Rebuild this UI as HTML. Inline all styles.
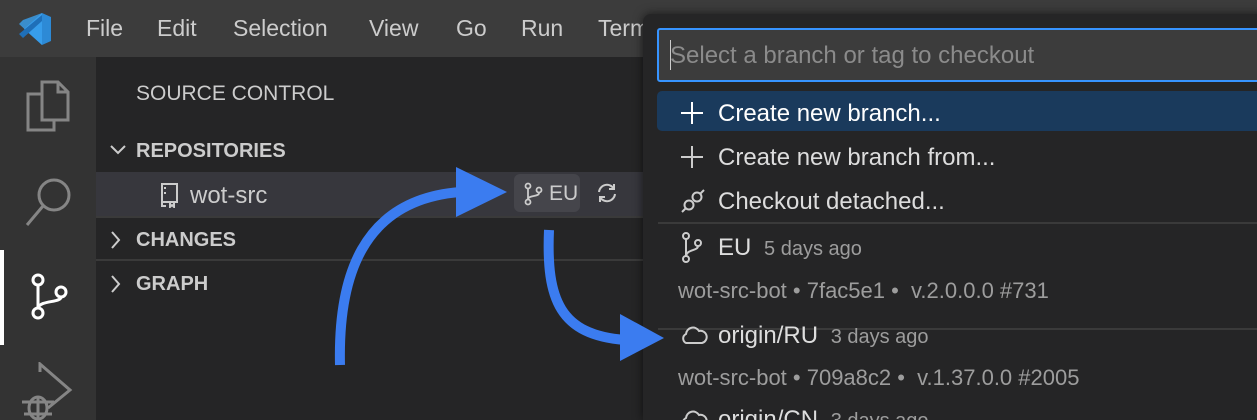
<!DOCTYPE html>
<html style="height:420px;overflow:hidden"><head><style>
body{margin:0;width:1257px;height:420px;overflow:hidden;background:#252526;font-family:"Liberation Sans",sans-serif;position:relative;color:#ccc}
.abs{position:absolute;white-space:nowrap}
#title{left:0;top:0;width:1257px;height:57px;background:#3c3c3c}
#act{left:0;top:57px;width:96px;height:363px;background:#333333}
.menu{top:15px;font-size:23px;color:#ccc}
.qp{left:643px;top:14px;width:620px;height:406px;background:#252526;border-radius:8px 0 0 0;box-shadow:0 0 10px rgba(0,0,0,.6)}
.row{font-size:24px;color:#ddd}
.det{font-size:22px;color:#9d9d9d}
.time{font-size:20px;color:#9d9d9d}
</style></head><body>
<div class="abs" id="title"></div>
<svg class="abs" style="left:16px;top:12px" width="36" height="34" viewBox="0 0 36 34"><path d="M26 1 L35 5 V29 L26 33 L8 17 Z" fill="#2d8ad6"/><path d="M26 1 L26 33 L3 12 L7 8 Z" fill="#3aa1f0" opacity=".8"/><path d="M3 22 L7 26 L26 9 V3 Z" fill="#1f6fb8"/></svg>
<div class="abs menu" style="left:86px">File</div>
<div class="abs menu" style="left:157px">Edit</div>
<div class="abs menu" style="left:233px">Selection</div>
<div class="abs menu" style="left:369px">View</div>
<div class="abs menu" style="left:456px">Go</div>
<div class="abs menu" style="left:521px">Run</div>
<div class="abs menu" style="left:598px">Term</div>
<div class="abs" id="act"></div>
<div class="abs" style="left:0;top:250px;width:4px;height:95px;background:#fff"></div>
<svg class="abs" style="left:24px;top:78px" width="50" height="56" fill="none" stroke="#858585" stroke-width="3"><path d="M18 4 H34 L44 14 V42 H18 Z M34 4 V14 H44"/><path d="M18 16 H4 V52 H30 V42"/></svg>
<svg class="abs" style="left:24px;top:175px" width="50" height="52" fill="none" stroke="#858585" stroke-width="3"><circle cx="30" cy="20" r="15"/><path d="M19 31 L3 50"/></svg>
<svg class="abs" style="left:26px;top:270px" width="44" height="56" fill="none" stroke="#fff" stroke-width="3"><circle cx="12" cy="10" r="5"/><circle cx="35" cy="22" r="5"/><circle cx="12" cy="43" r="5"/><path d="M12 15 V38 M35 27 C35 33 14 30 12 38"/></svg>
<svg class="abs" style="left:18px;top:362px" width="56" height="58" fill="none" stroke="#858585" stroke-width="3"><path d="M22 10 V2 L52 28 L30 46"/><ellipse cx="20" cy="46" rx="9" ry="11"/><path d="M4 40 H36 M6 52 H34 M20 36 V58"/></svg>

<div class="abs" style="left:136px;top:82px;font-size:21px;color:#ccc">SOURCE CONTROL</div>
<svg class="abs" style="left:108px;top:140px" width="20" height="20" fill="none" stroke="#ccc" stroke-width="2"><path d="M3 6 L10 13 L17 6"/></svg>
<div class="abs" style="left:136px;top:140px;font-size:20px;font-weight:bold;color:#ccc">REPOSITORIES</div>
<div class="abs" style="left:96px;top:172px;width:547px;height:44px;background:#37373d"></div>
<svg class="abs" style="left:158px;top:182px" width="22" height="26" fill="none" stroke="#ccc" stroke-width="2"><path d="M4 2 H19 V20 H4 Z M4 20 V24 H8 M12 20 V25 L14 23 L16 25 V20 M7 5 V7 M7 10 V12"/></svg>
<div class="abs" style="left:190px;top:182px;font-size:24px;color:#ccc">wot-src</div>
<div class="abs" style="left:514px;top:174px;width:66px;height:38px;background:#45454b;border-radius:6px"></div>
<svg class="abs" style="left:521px;top:182px" width="24" height="24" fill="none" stroke="#ccc" stroke-width="1.8"><circle cx="7" cy="4" r="2.5"/><circle cx="18" cy="8" r="2.5"/><circle cx="7" cy="20" r="2.5"/><path d="M7 7 V17 M18 11 C18 15 8 13 7 17"/></svg>
<div class="abs" style="left:549px;top:182px;font-size:21px;color:#ccc">EU</div>
<svg class="abs" style="left:595px;top:181px" width="24" height="24" fill="none" stroke="#ccc" stroke-width="2"><path d="M4 11 A8 8 0 0 1 19 8 M20 13 A8 8 0 0 1 5 16"/><path d="M19 3 V8 H14 M5 21 V16 H10"/></svg>
<div class="abs" style="left:96px;top:216px;width:547px;height:2px;background:#3a3a3a"></div>
<svg class="abs" style="left:106px;top:229px" width="20" height="22" fill="none" stroke="#ccc" stroke-width="2"><path d="M6 3 L13 11 L6 19"/></svg>
<div class="abs" style="left:136px;top:229px;font-size:20px;font-weight:bold;color:#ccc">CHANGES</div>
<div class="abs" style="left:96px;top:259px;width:547px;height:2px;background:#3a3a3a"></div>
<svg class="abs" style="left:106px;top:273px" width="20" height="22" fill="none" stroke="#ccc" stroke-width="2"><path d="M6 3 L13 11 L6 19"/></svg>
<div class="abs" style="left:136px;top:273px;font-size:20px;font-weight:bold;color:#ccc">GRAPH</div>

<div class="abs qp"></div>
<div class="abs" style="left:657px;top:28px;width:610px;height:50px;background:#3c3c3c;border:2px solid #3794ff;border-radius:3px"></div>
<div class="abs" style="left:670px;top:42px;font-size:24px;color:#8b8b8b">Select a branch or tag to checkout</div>
<div class="abs" style="left:670px;top:40px;width:1px;height:30px;background:#ccc"></div>
<div class="abs" style="left:657px;top:91px;width:610px;height:40px;background:#1a3a5c;border-radius:5px"></div>
<svg class="abs" style="left:680px;top:101px" width="24" height="24" stroke="#fff" stroke-width="2"><path d="M12 1 V23 M1 12 H23"/></svg>
<div class="abs row" style="left:718px;top:100px;color:#fff">Create new branch...</div>
<svg class="abs" style="left:680px;top:145px" width="24" height="24" stroke="#ccc" stroke-width="2"><path d="M12 1 V23 M1 12 H23"/></svg>
<div class="abs row" style="left:718px;top:144px">Create new branch from...</div>
<svg class="abs" style="left:680px;top:188px" width="26" height="26" fill="none" stroke="#ccc" stroke-width="2"><path d="M2 24 L6 20 M24 2 L20 6"/><circle cx="9" cy="17" r="4.5"/><circle cx="17" cy="9" r="4.5"/></svg>
<div class="abs row" style="left:718px;top:188px">Checkout detached...</div>
<div class="abs" style="left:658px;top:222px;width:600px;height:2px;background:#3a3a3a"></div>
<svg class="abs" style="left:680px;top:232px" width="24" height="32" fill="none" stroke="#ccc" stroke-width="2"><circle cx="6" cy="4" r="3"/><circle cx="18" cy="11" r="3"/><circle cx="6" cy="27" r="3"/><path d="M6 7 V24 M18 14 C18 19 7 17 6 24"/></svg>
<div class="abs row" style="left:718px;top:234px">EU <span class="time" style="margin-left:6px">5 days ago</span></div>
<div class="abs det" style="left:678px;top:278px">wot-src-bot • 7fac5e1 •&nbsp; v.2.0.0.0 #731</div>
<div class="abs" style="left:658px;top:328px;width:600px;height:2px;background:#3a3a3a"></div>
<svg class="abs" style="left:680px;top:324px" width="28" height="22" fill="none" stroke="#ccc" stroke-width="2"><path d="M6 19 A5 5 0 0 1 6 10 A7 7 0 0 1 19 7 A6 6 0 0 1 22 19 Z"/></svg>
<div class="abs row" style="left:718px;top:322px">origin/RU <span class="time" style="margin-left:6px">3 days ago</span></div>
<div class="abs det" style="left:678px;top:365px">wot-src-bot • 709a8c2 •&nbsp; v.1.37.0.0 #2005</div>
<svg class="abs" style="left:680px;top:408px" width="28" height="22" fill="none" stroke="#ccc" stroke-width="2"><path d="M6 19 A5 5 0 0 1 6 10 A7 7 0 0 1 19 7 A6 6 0 0 1 22 19 Z"/></svg>
<div class="abs row" style="left:718px;top:406px">origin/CN <span class="time" style="margin-left:6px">3 days ago</span></div>

<svg class="abs" style="left:0;top:0" width="1257" height="420">
<path d="M340 365 C338 280 360 200 460 192" fill="none" stroke="#3b7cf0" stroke-width="10"/>
<path d="M456 167 L507 192 L456 217 Z" fill="#3b7cf0"/>
<path d="M549 230 C546 300 560 335 625 340" fill="none" stroke="#3b7cf0" stroke-width="10"/>
<path d="M620 314 L664 338 L620 361 Z" fill="#3b7cf0"/>
</svg>
</body></html>
